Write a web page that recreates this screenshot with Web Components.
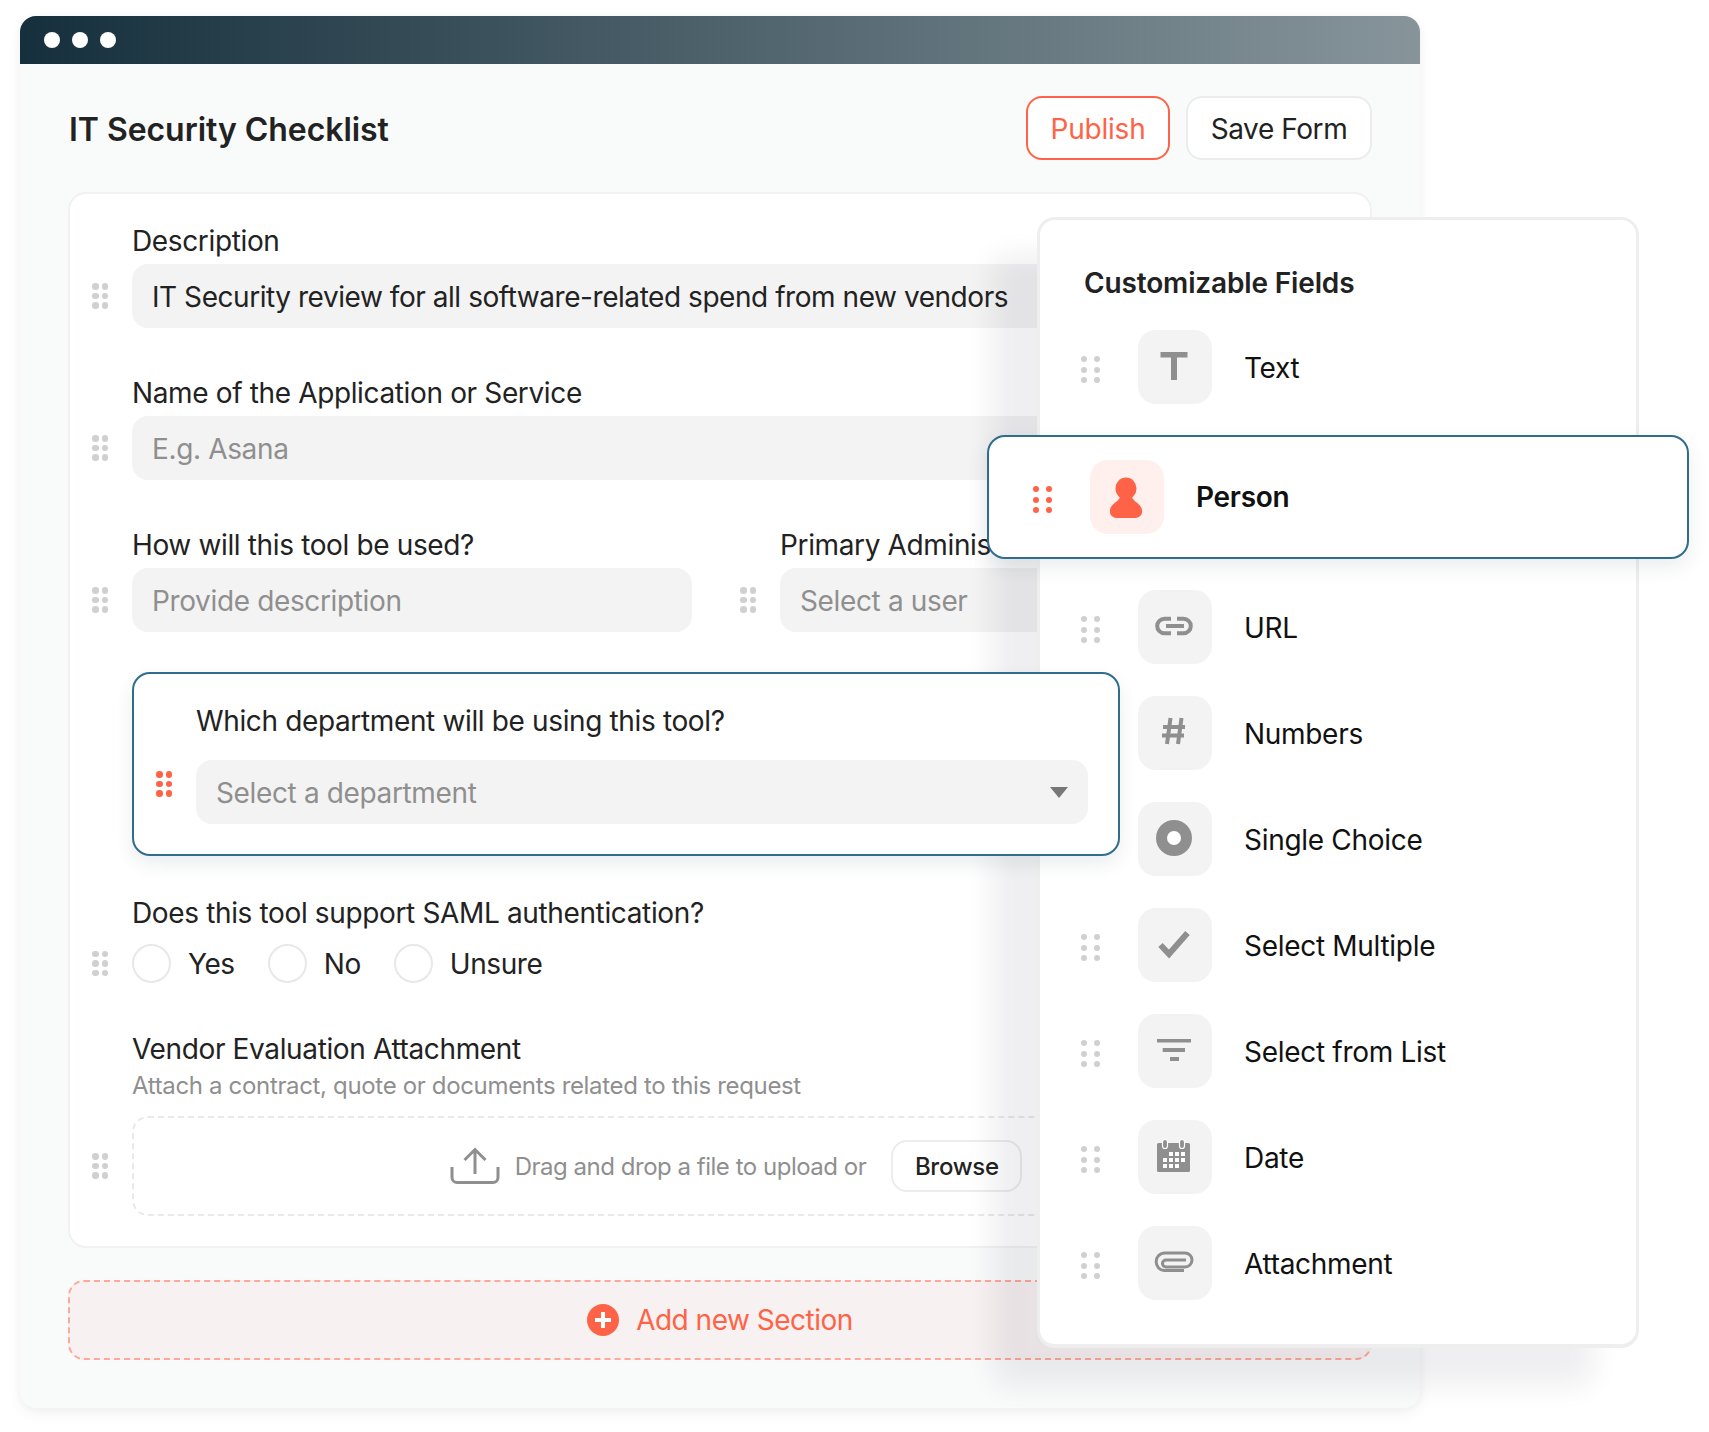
<!DOCTYPE html>
<html lang="en">
<head>
<meta charset="utf-8">
<title>IT Security Checklist</title>
<style>
  html, body { margin: 0; background: #fff; }
  body { font-family: Inter, "Liberation Sans", sans-serif; color: #222; position: relative; width: 1709px; height: 1432px; overflow: hidden; }
  .fields-row { display: flex; gap: 48px; }
  .fields-row > * { flex: 1 1 0; }
</style>
</head>
<body>
<form-window heading="IT Security Checklist">
  <form-field label="Description"><text-box value="IT Security review for all software-related spend from new vendors"></text-box></form-field>
  <form-field label="Name of the Application or Service"><text-box placeholder="E.g. Asana"></text-box></form-field>
  <div class="fields-row">
    <form-field label="How will this tool be used?"><text-box placeholder="Provide description"></text-box></form-field>
    <form-field label="Primary Administrator"><text-box placeholder="Select a user"></text-box></form-field>
  </div>
  <form-field active label="Which department will be using this tool?"><text-box placeholder="Select a department" caret></text-box></form-field>
  <form-field label="Does this tool support SAML authentication?" tight>
    <radio-group options="Yes,No,Unsure"></radio-group>
  </form-field>
  <form-field label="Vendor Evaluation Attachment" hint="Attach a contract, quote or documents related to this request"><drop-zone></drop-zone></form-field>
</form-window>

<fields-panel heading="Customizable Fields">
  <field-item label="Text"><svg viewBox="0 0 74 74"><path d="M22.500 22h27v5.500H39V50h-6V27.500H22.500z" fill="#8f8f8f"/></svg></field-item>
  <field-item active label="Person"><svg viewBox="0 0 74 74"><ellipse cx="36" cy="28.500" rx="10.500" ry="11" fill="#ff6347"/><path d="M30 37c-1 5-11 7-10 15 0 4 4 6 8 6h16c4 0 8-2 8-6 1-8-9-10-10-15z" fill="#ff6347"/></svg></field-item>
  <field-item label="URL"><svg viewBox="0 0 74 74"><path d="M33 28.700h-6.500a7.300 7.300 0 0 0 0 14.600H33M39 28.700h6.500a7.300 7.300 0 0 1 0 14.600H39M28 36h18" fill="none" stroke="#8f8f8f" stroke-width="4"/></svg></field-item>
  <field-item label="Numbers"><svg viewBox="0 0 74 74"><path d="M32.500 22 29 48M43.500 22 40 48M25 31h22M24 39.500h22" fill="none" stroke="#8f8f8f" stroke-width="4"/></svg></field-item>
  <field-item label="Single Choice"><svg viewBox="0 0 74 74"><circle cx="36" cy="36" r="18" fill="#8f8f8f"/><circle cx="36" cy="36" r="7" fill="#fff"/></svg></field-item>
  <field-item label="Select Multiple"><svg viewBox="0 0 74 74"><path d="M22.500 37 31 46 49.500 25" fill="none" stroke="#8f8f8f" stroke-width="6"/></svg></field-item>
  <field-item label="Select from List"><svg viewBox="0 0 74 74"><path d="M19 25h34v3.500H19zM24.700 34H47v4H24.700zM32 43h9v4h-9z" fill="#8f8f8f"/></svg></field-item>
  <field-item label="Date"><svg viewBox="0 0 74 74"><rect x="19" y="23" width="33" height="29" rx="1.500" fill="#8f8f8f"/><g fill="#8f8f8f" stroke="#fff" stroke-width="1.200"><rect x="24.500" y="19.500" width="5" height="9" rx="2.500"/><rect x="41.500" y="19.500" width="5" height="9" rx="2.500"/></g><path fill="#fff" d="M31 32h4v4h-4zM37 32h4v4h-4zM43 32h4v4h-4zM25 38h4v4h-4zM31 38h4v4h-4zM37 38h4v4h-4zM43 38h4v4h-4zM25 44h4v4h-4zM31 44h4v4h-4zM37 44h4v4h-4z"/></svg></field-item>
  <field-item label="Attachment"><svg viewBox="0 0 74 74"><path d="M46 44.500H26a8.800 8.800 0 0 1 0-17.500h21a7 7 0 0 1 0 14H28a3.500 3.500 0 0 1 0-7h20" fill="none" stroke="#8f8f8f" stroke-width="3"/></svg></field-item>
</fields-panel>

<script>
class DragGrip extends HTMLElement {
  constructor() {
    super()
    this.attachShadow({ mode: 'open' })
  }

  connectedCallback() {
    const dots = Array(6).fill('<i></i>').join('')
    this.shadowRoot.innerHTML = `
      <style>
        :host { display: inline-grid; grid-template-columns: repeat(2, var(--grip-dot, 6.500px)); justify-content: space-between; row-gap: var(--grip-row, 3.200px); width: var(--grip-width, 16px); flex: none; }
        i { width: var(--grip-dot, 6.500px); height: var(--grip-dot, 6.500px); border-radius: 50%; background: var(--grip-color, #d0d0d0); }
      </style>
      ${dots}`
  }
}

class TextBox extends HTMLElement {
  constructor() {
    super()
    this.attachShadow({ mode: 'open' })
  }

  connectedCallback() {
    const value = this.getAttribute('value')
    const text = value || this.getAttribute('placeholder')
    this.shadowRoot.innerHTML = `
      <style>
        :host { display: flex; align-items: center; justify-content: space-between; height: 64px; padding: 1px 20px 0; box-sizing: border-box; background: #f3f3f3; border-radius: 16px; font-size: 28px; letter-spacing: -.45px; white-space: nowrap; overflow: hidden; }
        .ph { color: #8f8f8f; letter-spacing: -.36px; }
        .caret { width: 0; height: 0; border: 9px solid transparent; border-top: 11px solid #777; border-bottom: 0; }
      </style>
      <span class="${value ? '' : 'ph'}">${text}</span>
      ${this.hasAttribute('caret') ? '<span class="caret"></span>' : ''}`
  }
}

class FormField extends HTMLElement {
  constructor() {
    super()
    this.attachShadow({ mode: 'open' })
  }

  connectedCallback() {
    const hint = this.getAttribute('hint')
    this.shadowRoot.innerHTML = `
      <style>
        :host { display: grid; grid-template-columns: 16px minmax(0, 1fr); column-gap: 24px; align-items: center; font-size: 28px; letter-spacing: -.36px; }
        :host([active]) { position: relative; z-index: 2; margin: 0 0 0 40px; width: 988px; box-sizing: border-box; padding: 30px 30px 30px 22px; border: 2px solid #2f6d8c; border-radius: 18px; background: #fff; box-shadow: 0 8px 18px rgba(30, 50, 70, .09); --grip-color: #ff6347; }
        :host([active]) drag-grip { margin-bottom: 16px; }
        .label { grid-column: 2; line-height: 32px; padding-top: 1px; margin-bottom: -1px; white-space: nowrap; }
        .hint { grid-column: 2; font-size: 24px; letter-spacing: -.34px; line-height: 32px; color: #8f8f8f; margin-top: 6px; }
        .gap { grid-column: 1 / 3; height: 8px; }
        :host([active]) .gap { height: 24px; }
        :host([tight]) .gap { height: 16px; }
        :host([hint]) .gap { height: 14px; }
        .control { grid-column: 2; min-width: 0; }
        drag-grip { grid-column: 1; }
      </style>
      <div class="label">${this.getAttribute('label')}</div>
      ${hint ? `<div class="hint">${hint}</div>` : ''}
      <div class="gap"></div>
      <drag-grip></drag-grip>
      <div class="control"><slot></slot></div>`
  }
}

class RadioGroup extends HTMLElement {
  constructor() {
    super()
    this.attachShadow({ mode: 'open' })
  }

  connectedCallback() {
    const items = this.getAttribute('options').split(',')
    this.shadowRoot.innerHTML = `
      <style>
        :host { display: flex; gap: 33px; font-size: 28px; letter-spacing: -.42px; }
        label { display: flex; align-items: center; gap: 17px; }
        i { width: 39px; height: 39px; box-sizing: border-box; border: 2px solid #e8e8e8; border-radius: 50%; background: #fff; }
      </style>
      ${items.map(o => `<label><i></i>${o}</label>`).join('')}`
  }
}

class DropZone extends HTMLElement {
  constructor() {
    super()
    this.attachShadow({ mode: 'open' })
  }

  connectedCallback() {
    this.shadowRoot.innerHTML = `
      <style>
        :host { display: flex; align-items: center; justify-content: center; height: 100px; box-sizing: border-box; border: 2px dashed #e9e9e9; border-radius: 16px; font-size: 24px; letter-spacing: -.48px; color: #8f8f8f; }
        svg { width: 50px; height: 38px; margin-right: 15px; }
        button { margin-left: 25px; width: 131px; height: 52px; font: 500 24px Inter, "Liberation Sans", sans-serif; letter-spacing: -.3px; color: #222; background: #fff; border: 2px solid #ececec; border-radius: 16px; padding: 0; }
      </style>
      <svg viewBox="0 0 50 38"><path d="M25 27V3M14.500 13 25 2.500 35.500 13M2 20v10.500a5 5 0 0 0 5 5h36a5 5 0 0 0 5-5V20" fill="none" stroke="#8f8f8f" stroke-width="3"/></svg>
      <span>Drag and drop a file to upload or</span>
      <button>Browse</button>`
  }
}

class FormWindow extends HTMLElement {
  constructor() {
    super()
    this.attachShadow({ mode: 'open' })
  }

  connectedCallback() {
    this.shadowRoot.innerHTML = `
      <style>
        :host { display: block; width: 1400px; height: 1392px; margin: 16px 0 0 20px; background: #f9fafa; border-radius: 16px; box-shadow: 0 6px 14px rgba(0, 0, 0, .05), 0 0 8px rgba(0, 0, 0, .03); overflow: hidden; }
        .bar { display: flex; align-items: center; gap: 12px; height: 48px; padding-left: 24px; background: linear-gradient(90deg, #152f3c, #87959b); }
        .bar i { width: 16px; height: 16px; border-radius: 50%; background: #fff; }
        .head { display: flex; align-items: center; justify-content: space-between; padding: 32px 48px; }
        h1 { margin: 0 0 0 1px; padding-top: 2px; font-size: 32px; letter-spacing: -.05px; font-weight: 600; color: #222; }
        .actions { display: flex; gap: 16px; }
        button { height: 64px; padding: 1px 0 0; font: 28px Inter, "Liberation Sans", sans-serif; letter-spacing: -.42px; border-radius: 16px; background: #fff; border: 2px solid #ececec; color: #222; }
        .publish { width: 144px; letter-spacing: -.2px; color: #ff6347; border-color: #ff6347; }
        .save { width: 186px; }
        .card { display: flex; flex-direction: column; margin: 0 48px; padding: 30px 30px 30px 22px; background: #fff; border: 2px solid #f1f1f1; border-radius: 18px; }
        .card ::slotted(*) { margin-bottom: 48px; }
        .card ::slotted(.fields-row), .card ::slotted([active]) { margin-bottom: 40px; }
        .card ::slotted([tight]) { margin-bottom: 49px; }
        .card ::slotted(:last-child) { margin-bottom: 0; }
        .add { display: flex; align-items: center; justify-content: center; gap: 17px; height: 80px; margin: 32px 48px 0; box-sizing: border-box; border: 2px dashed #ffa899; border-radius: 16px; background: #f8f1f1; color: #ff6347; font-size: 28px; letter-spacing: -.5px; }
        .add svg { width: 32px; height: 32px; }
      </style>
      <div class="bar"><i></i><i></i><i></i></div>
      <div class="head">
        <h1>${this.getAttribute('heading')}</h1>
        <div class="actions"><button class="publish">Publish</button><button class="save">Save Form</button></div>
      </div>
      <div class="card"><slot></slot></div>
      <div class="add">
        <svg viewBox="0 0 32 32"><circle cx="16" cy="16" r="16" fill="#ff6347"/><path d="M16 8v16M8 16h16" stroke="#fff" stroke-width="4"/></svg>
        <span>Add new Section</span>
      </div>`
  }
}

class FieldsPanel extends HTMLElement {
  constructor() {
    super()
    this.attachShadow({ mode: 'open' })
  }

  connectedCallback() {
    this.shadowRoot.innerHTML = `
      <style>
        :host { position: absolute; z-index: 1; left: 1037px; top: 217px; width: 602px; height: 1131px; box-sizing: border-box; padding: 45px 0 0 41px; background: #fff; border: 3px solid #eee; border-bottom-width: 4px; border-radius: 18px; box-shadow: -45px 38px 28px rgba(25, 30, 60, .07); display: flex; flex-direction: column; }
        h2 { margin: 0 0 31px 3px; padding-top: 1px; height: 33px; font-size: 28px; letter-spacing: -.15px; line-height: 34px; font-weight: 600; color: #222; }
        .list { display: flex; flex-direction: column; gap: 32px; }
      </style>
      <h2>${this.getAttribute('heading')}</h2>
      <div class="list"><slot></slot></div>`
  }
}

class FieldItem extends HTMLElement {
  constructor() {
    super()
    this.attachShadow({ mode: 'open' })
  }

  connectedCallback() {
    this.shadowRoot.innerHTML = `
      <style>
        :host { display: flex; align-items: center; font-size: 28px; letter-spacing: -.3px; color: #111; --grip-width: 19px; --grip-dot: 6px; --grip-row: 4.500px; }
        :host([active]) { margin: -1px -53px -1px -94px; padding: 23px 0 23px 44px; border: 2px solid #2f6d8c; border-radius: 18px; background: #fff; box-shadow: 0 8px 20px rgba(30, 50, 70, .09); font-weight: 600; --grip-color: #ff6347; }
        :host(:not([active])) span { padding-top: 2px; }
        drag-grip { margin: 5px 38px 0 0; }
        .tile { width: 74px; height: 74px; border-radius: 18px; background: #f3f3f3; margin-right: 32px; flex: none; }
        :host([active]) .tile { background: #fff0ed; }
        ::slotted(svg) { display: block; width: 74px; height: 74px; }
      </style>
      <drag-grip></drag-grip>
      <div class="tile"><slot></slot></div>
      <span>${this.getAttribute('label')}</span>`
  }
}

customElements.define('drag-grip', DragGrip)
customElements.define('text-box', TextBox)
customElements.define('form-field', FormField)
customElements.define('radio-group', RadioGroup)
customElements.define('drop-zone', DropZone)
customElements.define('form-window', FormWindow)
customElements.define('fields-panel', FieldsPanel)
customElements.define('field-item', FieldItem)
</script>
</body>
</html>
